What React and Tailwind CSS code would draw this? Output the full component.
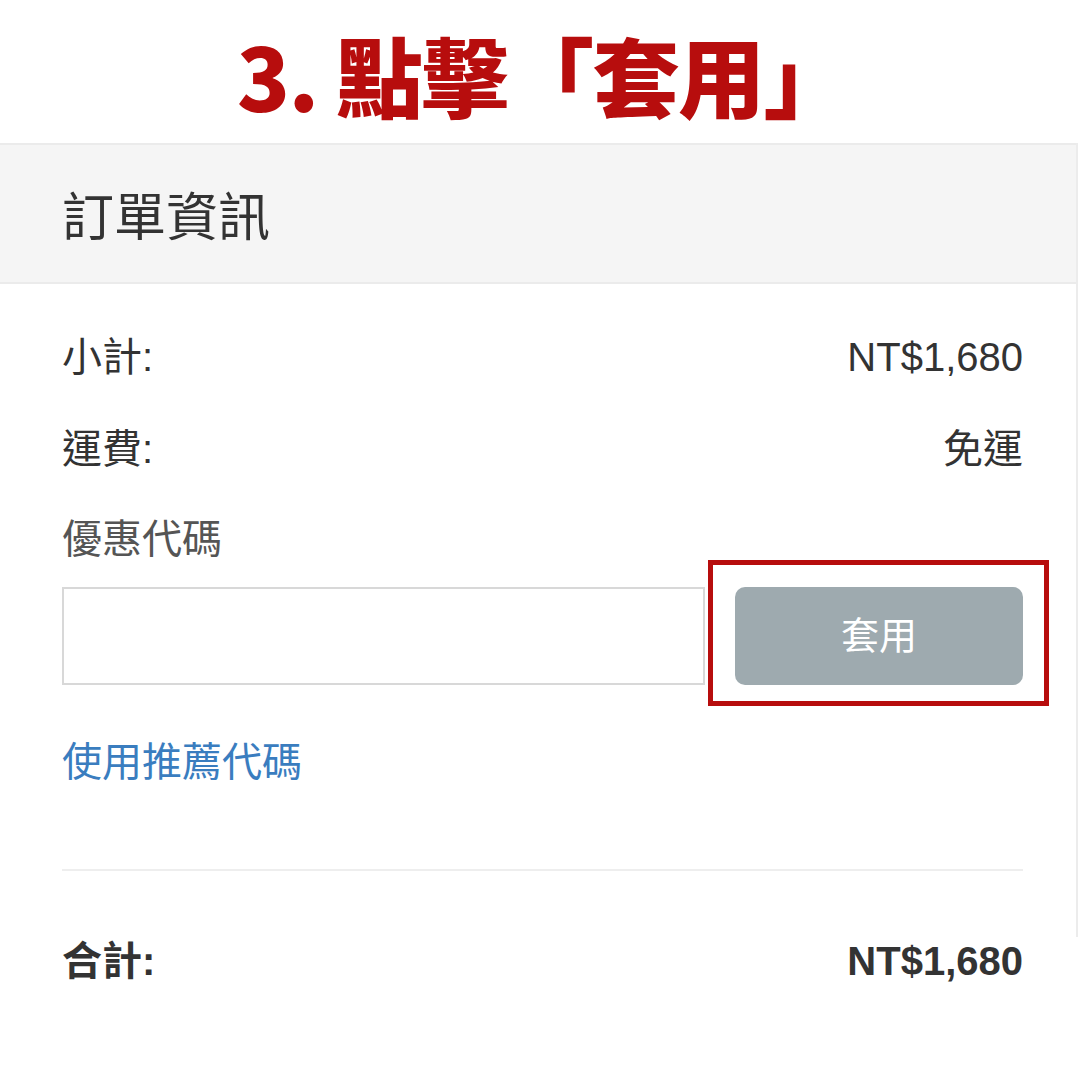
import React from "react";

const cjk = { fontFamily: '"Liberation Sans", "Noto Sans CJK TC", sans-serif' };

export default function App() {
  return (
    <div className="w-[1080px] h-[1080px] bg-white overflow-hidden" style={cjk}>
      <div className="h-[143px] flex items-start justify-center pt-[22px] pl-[6px]">
        <h1
          className="text-[87px] leading-[104px] font-black text-[#b70d0d] tracking-[-1.5px]"
          style={{ fontFamily: '"Noto Sans CJK TC", sans-serif' }}
        >
          3. 點擊「套用」
        </h1>
      </div>
      <div className="w-[1078px] h-[794px] border-r-2 border-[#ececec]">
        <div className="h-[141px] bg-[#f5f5f5] border-t-2 border-b-2 border-[#ebebeb] flex items-center pl-[62px]">
          <span className="text-[52px] text-[#333] leading-none" style={{ fontFamily: '"Noto Sans CJK TC", sans-serif' }}>訂單資訊</span>
        </div>
        <div className="pl-[62px] pr-[53px] pt-[49px] text-[#333]">
          <div className="flex justify-between items-center h-[48px] text-[40px] leading-[48px]">
            <span>小計:</span>
            <span>NT$1,680</span>
          </div>
          <div className="flex justify-between items-center h-[48px] text-[40px] leading-[48px] mt-[44px]">
            <span>運費:</span>
            <span>免運</span>
          </div>
          <div className="h-[48px] text-[40px] leading-[48px] mt-[42px] text-[#555]">優惠代碼</div>
          <div className="flex mt-[24px] gap-[30px]">
            <div className="w-[643px] h-[98px] border-2 border-[#d8d8d8] bg-white" />
            <div className="relative flex-1">
              <div className="absolute left-[-27px] right-[-26px] top-[-27px] bottom-[-21px] border-[5px] border-[#b70d0d]" />
              <div className="h-[98px] rounded-[10px] bg-[#9eaaaf] flex items-center justify-center text-white text-[38px]">
                套用
              </div>
            </div>
          </div>
          <div className="mt-[53px] h-[48px] text-[40px] leading-[48px] text-[#3a7dbf]">使用推薦代碼</div>
          <div className="mt-[83px] h-[2px] bg-[#eeeeee]" />
          <div className="flex justify-between items-center h-[48px] text-[40px] leading-[48px] mt-[66px] font-bold">
            <span>合計:</span>
            <span>NT$1,680</span>
          </div>
        </div>
      </div>
    </div>
  );
}
